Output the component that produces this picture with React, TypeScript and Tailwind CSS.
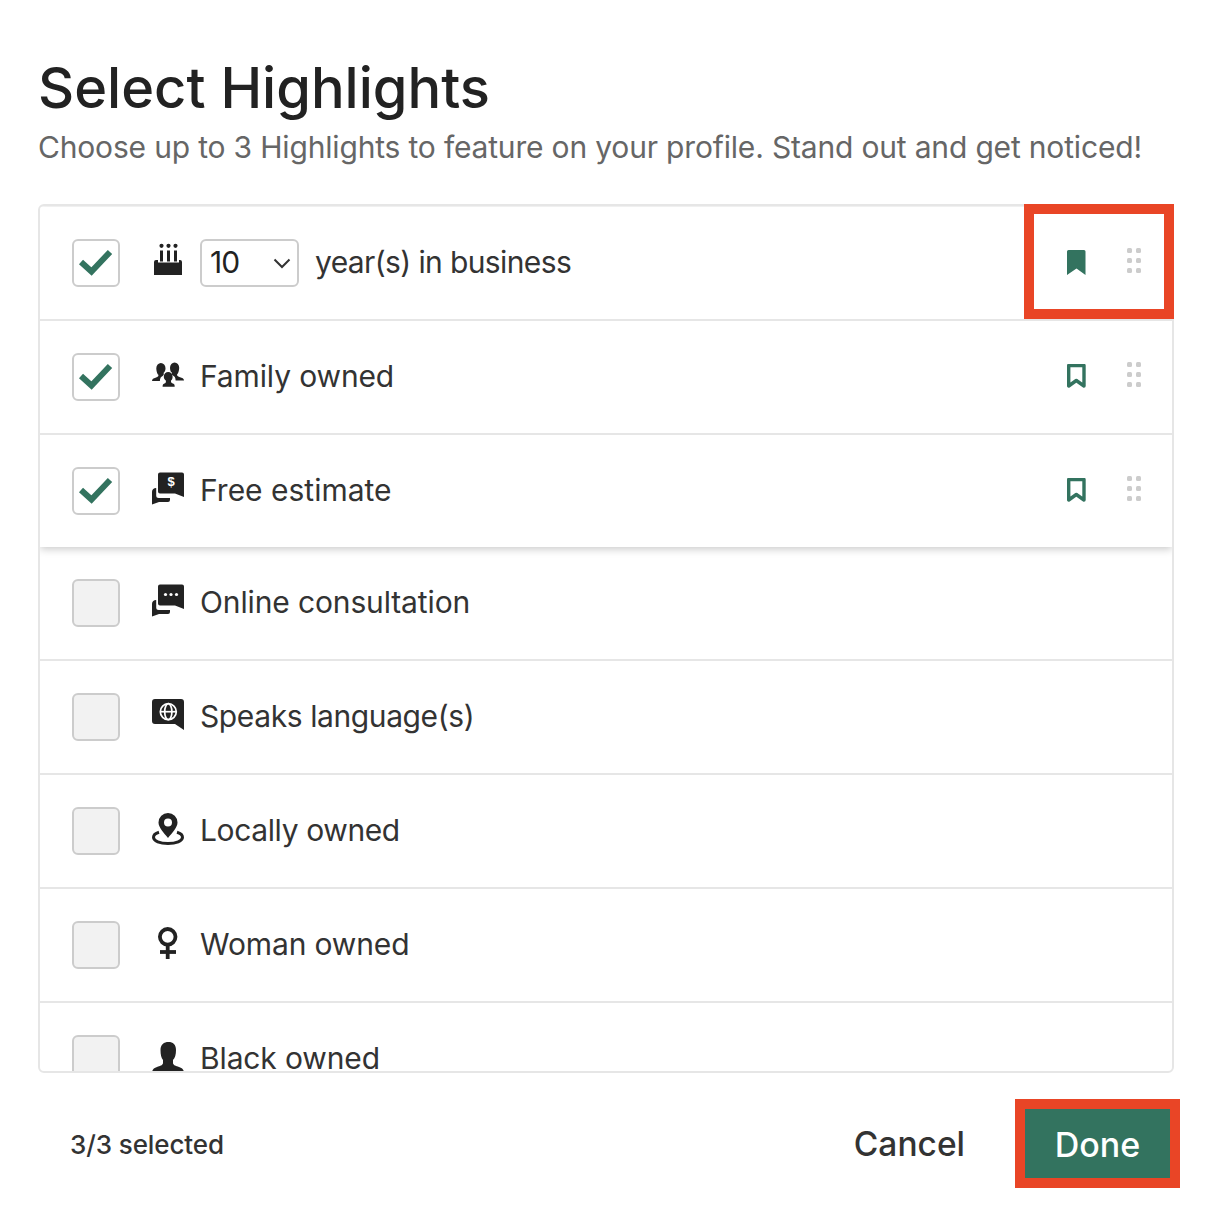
import React from "react";

const GREEN = "#33735f";
const INK = "#222222";

function IconBox({ children }: { children: React.ReactNode }) {
  return (
    <svg width="32" height="32" viewBox="0 0 32 32" className="shrink-0 overflow-visible" fill={INK}>
      {children}
    </svg>
  );
}

const Cake = () => (
  <IconBox>
    <circle cx="9.5" cy="-1.2" r="2.1" />
    <circle cx="16.5" cy="-1.2" r="2.1" />
    <circle cx="23.5" cy="-1.2" r="2.1" />
    <rect x="8" y="3.500" width="3" height="11" />
    <rect x="15" y="3.500" width="3" height="11" />
    <rect x="22" y="3.500" width="3" height="11" />
    <path d="M2 15 Q2 13 4 13 H6 V15.500 H27 V13 H28 Q30 13 30 15 V28 H2 Z" />
  </IconBox>
);

const Family = () => (
  <IconBox>
    <path d="M4.300 7.200 a4.600 5.200 0 0 1 9.200 0 c0 2 -.7 3.800 -1.800 4.600 v2 c.2 .8 -2.200 1.500 -3 2.800 c-.6 1 -.8 2.200 -.8 3.400 H0 c0 -2 1.500 -2.600 3.500 -3.200 c1.600 -.5 2.900 -1.100 2.900 -2.200 v-.8 c-1.300 -.8 -2.100 -4.600 -2.100 -6.600 Z" />
    <path d="M18 6.700 a4.600 5.200 0 0 1 9.200 0 c0 2 -.8 5.800 -2.100 6.600 v.8 c0 1.100 1.300 1.700 2.900 2.200 c2 .6 4 1.200 4 3.200 H23.600 c0 -1.200 -.2 -2.400 -.8 -3.400 c-.8 -1.300 -3.200 -2 -3 -2.800 v-2 C18.700 11.500 18 8.700 18 6.700 Z" />
    <path d="M11.800 15.800 a4.400 4.900 0 0 1 8.800 0 c0 1.700 -.6 3.200 -1.600 3.800 v1.200 c0 .9 .8 1.300 2 1.700 c1.300 .4 1.700 1.300 1.700 3.200 H10.600 c0 -1.900 .5 -2.800 1.800 -3.200 c1.200 -.4 1.500 -.8 1.500 -1.700 v-1.200 c-1.100 -.6 -2.100 -2.100 -2.100 -3.800 Z" />
  </IconBox>
);

const SmallBubble = () => (
  <path d="M4.200 13 V20.500 a2.500 2.500 0 0 0 2.500 2.500 H18 V25 a2 2 0 0 1 -2 2 H7 L0 29.500 V17 a4 4 0 0 1 4.200 -4 Z" />
);

const Estimate = () => (
  <IconBox>
    <SmallBubble />
    <path d="M8 -2.500 H30 a2 2 0 0 1 2 2 V22 L23 18.500 H8 a2 2 0 0 1 -2 -2 V-.5 a2 2 0 0 1 2 -2 Z" />
    <text x="19" y="11" textAnchor="middle" fontSize="13" fontWeight="700" fill="#fff" fontFamily="'Liberation Sans', sans-serif">$</text>
  </IconBox>
);

const Consult = () => (
  <IconBox>
    <SmallBubble />
    <path d="M8 -2.500 H30 a2 2 0 0 1 2 2 V22 L23 18.500 H8 a2 2 0 0 1 -2 -2 V-.5 a2 2 0 0 1 2 -2 Z" />
    <circle cx="13.500" cy="7.500" r="1.600" fill="#fff" />
    <circle cx="19" cy="7.500" r="1.600" fill="#fff" />
    <circle cx="24.500" cy="7.500" r="1.600" fill="#fff" />
  </IconBox>
);

const Language = () => (
  <IconBox>
    <path d="M3 -2 H29 a3 3 0 0 1 3 3 V29 L23 23 H3 a3 3 0 0 1 -3 -3 V1 a3 3 0 0 1 3 -3 Z" />
    <g fill="none" stroke="#fff" strokeWidth="1.700">
      <circle cx="16.300" cy="10.700" r="8" />
      <ellipse cx="16.300" cy="10.700" rx="3.600" ry="8" />
      <path d="M8.300 10.700 H24.300" />
    </g>
  </IconBox>
);

const Pin = () => (
  <IconBox>
    <path fillRule="evenodd" d="M16 -2 a9.500 9.500 0 0 1 9.500 9.500 c0 5 -5.500 10.500 -9.500 15.500 c-4 -5 -9.500 -10.500 -9.500 -15.500 A9.500 9.500 0 0 1 16 -2 Z M16 3.500 a4 4 0 1 0 0 8 a4 4 0 1 0 0 -8 Z" />
    <path d="M7 17.200 C3 18.400 1.500 20.200 1.500 22.300 C1.500 26 8 28.500 16 28.500 C24 28.500 30.500 26 30.500 22.300 C30.500 20.200 29 18.400 25 17.200" fill="none" stroke={INK} strokeWidth="3" />
  </IconBox>
);

const Woman = () => (
  <IconBox>
    <g fill="none" stroke={INK} strokeWidth="3.800">
      <circle cx="15.700" cy="7.800" r="7.800" />
      <path d="M15.700 15 V30" />
      <path d="M8 23 H24" />
    </g>
  </IconBox>
);

const Person = () => (
  <IconBox>
    <path d="M8.500 7 C8.500 1.500 12 -1 16.500 -1 C21 -1 24 1.500 24 7 C24 11.500 23 15 21 17 V20 C21 22 24 23 27 24 C30.500 25 32 27 32 30 H0 C0 27 1.500 25 5 24 C8 23 11 22 11 20 V17 C9.300 15 8.500 11.500 8.500 7 Z" />
  </IconBox>
);

function Check() {
  return (
    <svg width="44" height="44" viewBox="0 0 44 44" fill="none" className="block">
      <path d="M7 21 L17.500 30.500 L36 11" stroke={GREEN} strokeWidth="6" />
    </svg>
  );
}

function Box({ on }: { on: boolean }) {
  return (
    <div
      className={`flex h-[48px] w-[48px] shrink-0 items-center justify-center rounded-[6px] border-2 border-[#cccccc] ${
        on ? "bg-white" : "bg-[#f2f2f2]"
      }`}
    >
      {on && <Check />}
    </div>
  );
}

function Bookmark({ filled }: { filled: boolean }) {
  return (
    <svg width="20" height="25" viewBox="0 0 20 25" className="mb-[1px] block">
      {filled ? (
        <path d="M1.500 0 H17 a1.500 1.500 0 0 1 1.500 1.500 V25 L9.500 18.500 L0 25 V1.500 A1.500 1.500 0 0 1 1.500 0 Z" fill={GREEN} />
      ) : (
        <path d="M1.700 1.500 H17 V22 L9.300 16.500 L1.700 22 Z" fill="none" stroke={GREEN} strokeWidth="3.400" strokeLinejoin="round" />
      )}
    </svg>
  );
}

function Grip() {
  return (
    <svg width="14" height="25" viewBox="0 0 14 25" fill="#cccccc" className="block">
      <rect x="0" y="0" width="5" height="5" rx="1.500" />
      <rect x="9" y="0" width="5" height="5" rx="1.500" />
      <rect x="0" y="10" width="5" height="5" rx="1.500" />
      <rect x="9" y="10" width="5" height="5" rx="1.500" />
      <rect x="0" y="20" width="5" height="5" rx="1.500" />
      <rect x="9" y="20" width="5" height="5" rx="1.500" />
    </svg>
  );
}

function Row({
  icon,
  label,
  on,
  filled,
  select,
  last,
  track = "tracking-[-0.13px]",
}: {
  icon: React.ReactNode;
  label: string;
  on?: boolean;
  filled?: boolean;
  select?: boolean;
  last?: boolean;
  track?: string;
}) {
  return (
    <div
      className={`flex shrink-0 items-center pl-[32px] pr-[31px] ${
        last ? "h-[112px]" : "h-[114px] border-b-2 border-[#e6e6e6]"
      }`}
    >
      <Box on={!!on} />
      <div className="ml-[32px] flex items-center">{icon}</div>
      {select && (
        <div className="ml-[16px] mr-[16px] flex h-[48px] w-[99px] items-center justify-between rounded-[6px] border-2 border-[#cccccc] pl-[8px] pr-[6px]">
          <span className="-mt-[2px] text-[30px] leading-[40px] text-[#222222] tracking-[-0.9px]">10</span>
          <svg width="18" height="11" viewBox="0 0 18 11" fill="none" className="block">
            <path d="M1.500 1.500 L9 9 L16.500 1.500" stroke="#333333" strokeWidth="2" />
          </svg>
        </div>
      )}
      <span className={`${select ? "" : "ml-[16px]"} -mt-[2px] text-[30px] leading-[40px] text-[#333333] ${track}`}>
        {label}
      </span>
      {on && (
        <div className="ml-auto flex items-center gap-[40px]">
          <Bookmark filled={!!filled} />
          <div className="mb-[5px]">
            <Grip />
          </div>
        </div>
      )}
    </div>
  );
}

export default function App() {
  return (
    <div
      className="relative h-[1226px] w-[1212px] overflow-hidden bg-white px-[38px] pt-[56px]"
      style={{ fontFamily: "Inter, 'Open Sans', sans-serif" }}
    >
      <h1 className="text-[56px] font-medium leading-[64px] text-[#222222] tracking-[0px]">Select Highlights</h1>
      <p className="mt-[7px] whitespace-nowrap text-[30px] leading-[40px] text-[#666666] tracking-[-0.175px]">
        Choose up to 3 Highlights to feature on your profile. Stand out and get noticed!
      </p>

      <div className="mt-[37px] flex h-[869px] flex-col overflow-hidden rounded-[6px] border-2 border-[#e6e6e6] pt-px">
        <div className="relative z-10 flex flex-col bg-white shadow-[0_2px_8px_rgba(0,0,0,0.22)]">
          <Row icon={<Cake />} label="year(s) in business" on filled select track="tracking-[-0.62px]" />
          <Row icon={<Family />} label="Family owned" on />
          <Row icon={<Estimate />} label="Free estimate" on last track="tracking-[0px]" />
        </div>
        <Row icon={<Consult />} label="Online consultation" />
        <Row icon={<Language />} label="Speaks language(s)" track="tracking-[-0.4px]" />
        <Row icon={<Pin />} label="Locally owned" track="tracking-[-0.38px]" />
        <Row icon={<Woman />} label="Woman owned" />
        <Row icon={<Person />} label="Black owned" />
      </div>

      <div className="mt-[36px] flex items-center justify-between pl-[32px] pr-[4px]">
        <span className="pt-[1px] text-[26px] font-medium text-[#333333] tracking-[-0.1px]">3/3 selected</span>
        <div className="flex items-center">
          <button className="mr-[60px] text-[33.500px] font-medium text-[#333333]">Cancel</button>
          <button className="h-[70px] w-[145px] bg-[#33735f] text-[34px] font-medium text-white">Done</button>
        </div>
      </div>

      <div className="pointer-events-none absolute left-[1024px] top-[204px] z-20 h-[115px] w-[150px] border-[10px] border-[#e94526]" />
      <div className="pointer-events-none absolute left-[1015px] top-[1099px] z-20 h-[89px] w-[165px] border-[10px] border-[#e94526]" />
    </div>
  );
}
